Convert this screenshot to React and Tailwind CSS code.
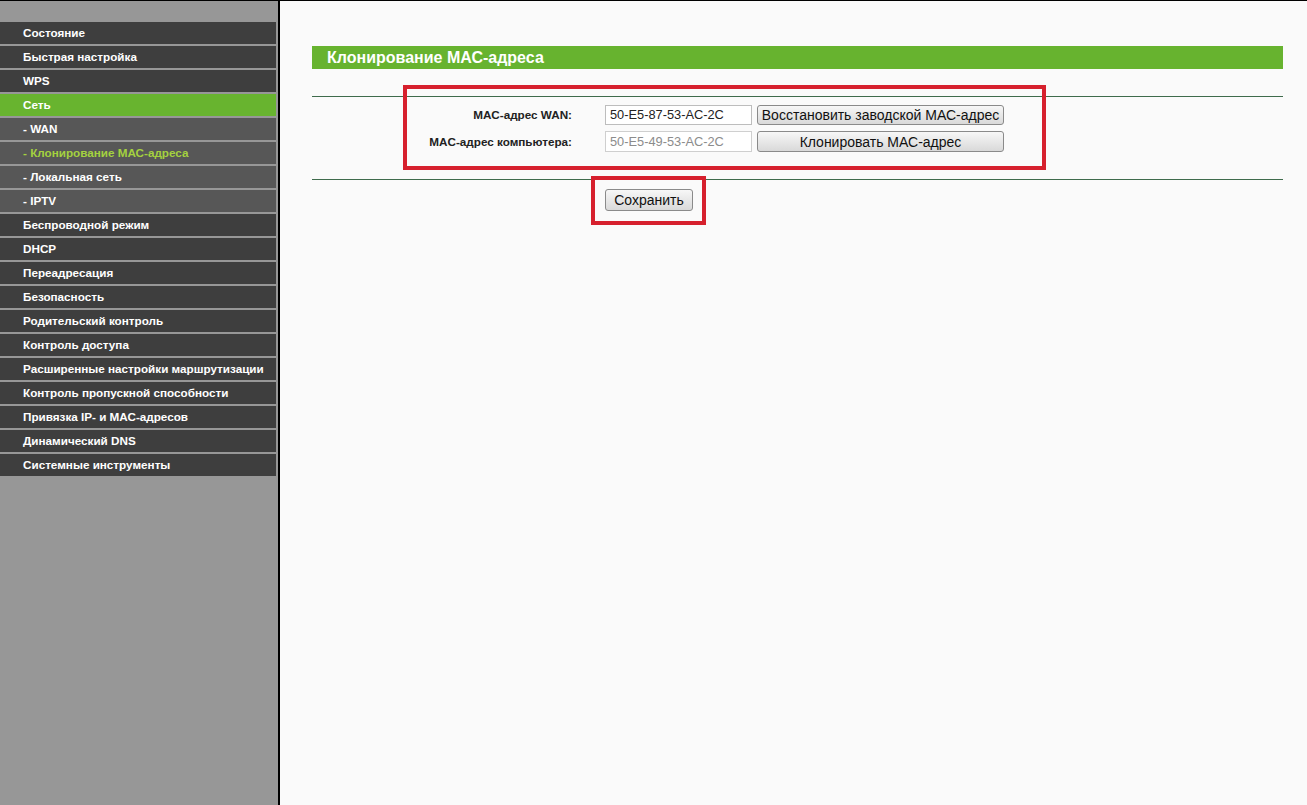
import React from "react";

const menu = [
  { label: "Состояние" },
  { label: "Быстрая настройка" },
  { label: "WPS" },
  { label: "Сеть", active: true },
  { label: "- WAN", sub: true },
  { label: "- Клонирование МАС-адреса", sub: true, current: true },
  { label: "- Локальная сеть", sub: true },
  { label: "- IPTV", sub: true },
  { label: "Беспроводной режим" },
  { label: "DHCP" },
  { label: "Переадресация" },
  { label: "Безопасность" },
  { label: "Родительский контроль" },
  { label: "Контроль доступа" },
  { label: "Расширенные настройки маршрутизации" },
  { label: "Контроль пропускной способности" },
  { label: "Привязка IP- и МАС-адресов" },
  { label: "Динамический DNS" },
  { label: "Системные инструменты" },
];

function MenuItem({ item }) {
  let bg = "bg-[#3e3e3e]";
  if (item.active) bg = "bg-[#68b42f]";
  else if (item.sub) bg = "bg-[#575757]";
  const color = item.current ? "text-[#a4d13f]" : "text-white";
  return (
    <div className={`h-[22px] mb-[2px] mr-[2px] flex items-center pl-[23px] text-[11.7px] font-bold ${bg} ${color}`}>
      {item.label}
    </div>
  );
}

export default function App() {
  return (
    <div
      className="w-[1307px] h-[805px] flex border-t border-black bg-[#fafafa] overflow-hidden"
      style={{ fontFamily: '"Liberation Sans", Arial, sans-serif' }}
    >
      {/* Sidebar */}
      <div className="w-[280px] shrink-0 bg-[#979797] border-r-2 border-black pt-[21px]">
        {menu.map(m => (
          <MenuItem key={m.label} item={m} />
        ))}
      </div>

      {/* Content */}
      <div className="relative flex-1 pl-[32px] pr-[24px] pt-[45px]">
        <div className="h-[23px] bg-[#67b32f] flex items-center pl-[15px] text-white font-bold text-[16px]">
          Клонирование МАС-адреса
        </div>

        <div className="mt-[27px] h-px bg-[#3f6b4c]" />

        <div className="mt-[8px] grid grid-cols-[288px_147px_247px] gap-x-[5px] gap-y-[6px] items-center">
          <div className="text-right text-[11.7px] font-bold text-[#222] pr-[28px]">MAC-адрес WAN:</div>
          <div className="h-[20px] bg-white border border-[#bdbdbd] flex items-center pl-[4px] text-[12.8px] text-[#222]">
            50-E5-87-53-AC-2C
          </div>
          <button className="h-[20px] rounded-[3px] border border-[#8a8a8a] bg-gradient-to-b from-[#f7f7f7] to-[#d9d9d9] text-[14px] text-[#111] leading-none">
            Восстановить заводской МАС-адрес
          </button>

          <div className="text-right text-[11.7px] font-bold text-[#222] pr-[28px]">MAC-адрес компьютера:</div>
          <div className="h-[21px] bg-white border border-[#cfcfcf] flex items-center pl-[4px] text-[12.8px] text-[#8c8c8c]">
            50-E5-49-53-AC-2C
          </div>
          <button className="h-[21px] rounded-[3px] border border-[#8a8a8a] bg-gradient-to-b from-[#f7f7f7] to-[#d9d9d9] text-[14px] text-[#111] leading-none">
            Клонировать МАС-адрес
          </button>
        </div>

        <div className="mt-[27px] h-px bg-[#3f6b4c]" />

        <div className="mt-[8px] pl-[293px]">
          <button className="w-[88px] h-[22px] rounded-[3px] border border-[#8a8a8a] bg-gradient-to-b from-[#f7f7f7] to-[#d9d9d9] text-[14px] text-[#111] leading-none">
            Сохранить
          </button>
        </div>

        {/* annotation boxes */}
        <div className="absolute left-[123px] top-[84px] w-[643px] h-[85px] border-[4px] border-[#d6202d]" />
        <div className="absolute left-[311px] top-[175px] w-[115px] h-[49px] border-[4px] border-[#d6202d]" />
      </div>
    </div>
  );
}
